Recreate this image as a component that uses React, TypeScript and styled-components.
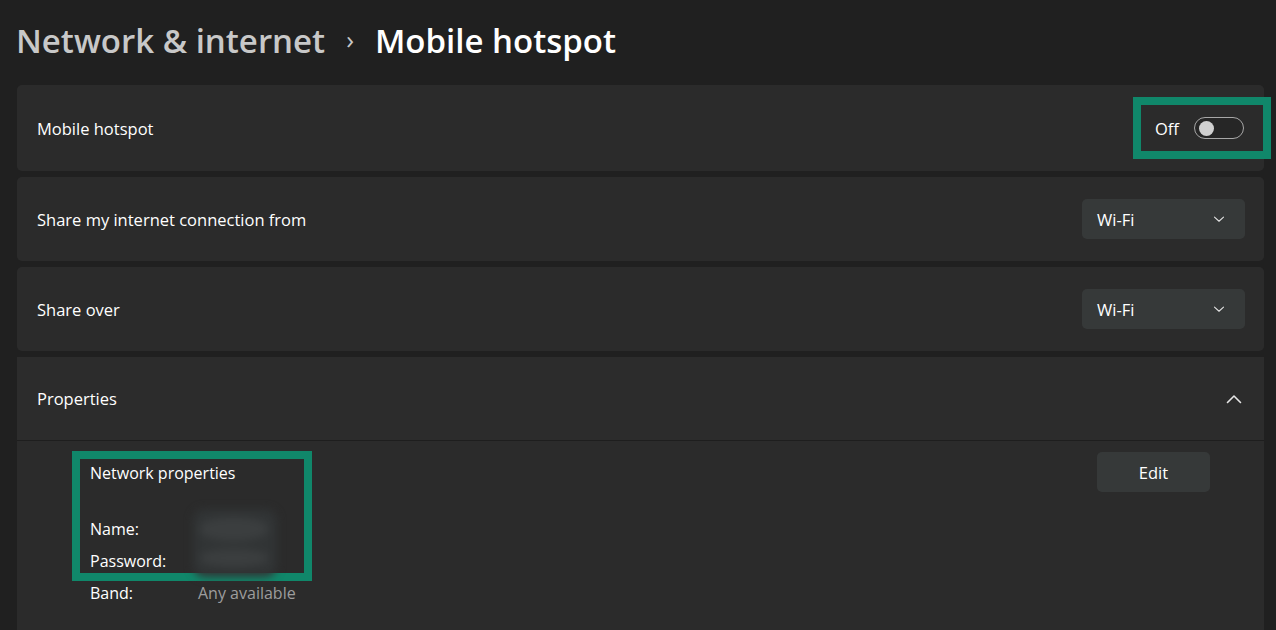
import React from "react";
import styled, { createGlobalStyle } from "styled-components";

const Global = createGlobalStyle`
  html, body { margin: 0; padding: 0; background: #202020; }
  body { font-family: "Open Sans", "Noto Sans", sans-serif; color: #ffffff; }
  * { box-sizing: border-box; }
`;

const Page = styled.div`
  width: 1276px;
  height: 630px;
  overflow: hidden;
  background: #202020;
  padding: 16px 12px 0 17px;
`;

const Title = styled.h1`
  margin: 0 0 19px -1px;
  display: flex;
  align-items: center;
  gap: 21px;
  font-size: 33px;
  font-weight: 600;
  line-height: 48px;
  height: 50px;
`;

const Crumb = styled.span<{ $current?: boolean }>`
  color: ${(p) => (p.$current ? "#ffffff" : "#c8c8c8")};
`;

const Sep = styled.span`
  color: #c8c8c8;
  font-size: 26px;
  font-weight: 400;
  margin-top: -5px;
`;

const List = styled.div`
  display: flex;
  flex-direction: column;
  gap: 6px;
`;

const Card = styled.div<{ $h: number }>`
  height: ${(p) => p.$h}px;
  background: #2b2b2b;
  border-radius: 5px;
  display: flex;
  align-items: center;
  justify-content: space-between;
  padding: 0 19px 0 20px;
`;

const Label = styled.span`
  font-size: 16.5px;
  color: #ffffff;
`;

const Highlight = styled.div`
  border: 8px solid #10876a;
`;

const ToggleBox = styled(Highlight)`
  width: 138px;
  height: 62px;
  margin-right: -26px;
  display: flex;
  align-items: center;
  padding-left: 14px;
  gap: 15px;
`;

const ToggleText = styled.span`
  font-size: 16.5px;
  color: #ffffff;
`;

const Toggle = styled.div`
  width: 50px;
  height: 22px;
  border-radius: 11px;
  border: 1px solid #a7a7a7;
  background: #262626;
  display: flex;
  align-items: center;
  padding-left: 4px;
`;

const Thumb = styled.div`
  width: 15px;
  height: 15px;
  border-radius: 50%;
  background: #d0d0d0;
`;

const Dropdown = styled.div`
  width: 163px;
  height: 40px;
  border-radius: 5px;
  background: #363939;
  display: flex;
  align-items: center;
  justify-content: space-between;
  padding: 0 20px 0 15px;
  font-size: 16.5px;
`;

const Section = styled.div`
  background: #2b2b2b;
  border-radius: 5px 5px 0 0;
  display: flex;
  flex-direction: column;
`;

const SectionHead = styled.div`
  height: 84px;
  background: #2c2c2c;
  border-bottom: 1px solid #1e1e1e;
  display: flex;
  align-items: center;
  justify-content: space-between;
  padding: 0 22px 0 20px;
`;

const SectionBody = styled.div`
  display: flex;
  justify-content: space-between;
  padding: 10px 54px 40px 55px;
`;

const PropsBox = styled(Highlight)`
  width: 240px;
  height: 130px;
  padding: 3px 0 0 10px;
  position: relative;
`;

const PropsTitle = styled.div`
  font-size: 16px;
  line-height: 22px;
  margin-bottom: 29px;
`;

const PropRow = styled.div`
  display: grid;
  grid-template-columns: 108px auto;
  font-size: 16px;
  line-height: 32px;
  height: 32px;
  position: relative;
`;

const PropKey = styled.span`
  color: #ffffff;
`;

const PropValue = styled.span`
  color: #9d9d9d;
`;

const Blur = styled.div`
  position: absolute;
  left: 113px;
  top: 50px;
  width: 84px;
  height: 68px;
  background: #313435;
  filter: blur(4px);
  border-radius: 12px;
`;

const Smudge = styled.div<{ $top: number; $w: number; $h: number }>`
  position: absolute;
  left: 6px;
  top: ${(p) => p.$top}px;
  width: ${(p) => p.$w}px;
  height: ${(p) => p.$h}px;
  border-radius: 50%;
  background: #3b3e3f;
`;

const BandRow = styled(PropRow)`
  margin: -4px 0 0 18px;
`;

const Button = styled.div`
  width: 113px;
  height: 40px;
  border-radius: 5px;
  background: #363939;
  display: flex;
  align-items: center;
  justify-content: center;
  font-size: 16.5px;
  margin-top: 1px;
`;

const Chevron = ({ up }: { up?: boolean }) => (
  <svg width={up ? 16 : 12} height={up ? 10 : 8} viewBox="0 0 16 10" fill="none">
    <path
      d={up ? "M1.5 8.5 L8 2 L14.5 8.5" : "M2 2.5 L8 8 L14 2.5"}
      stroke="#e6e6e6"
      strokeWidth={up ? 1.6 : 1.4}
      strokeLinecap="round"
      strokeLinejoin="round"
    />
  </svg>
);

export default function App() {
  return (
    <>
      <Global />
      <Page>
        <Title>
          <Crumb>Network &amp; internet</Crumb>
          <Sep>›</Sep>
          <Crumb $current>Mobile hotspot</Crumb>
        </Title>
        <List>
          <Card $h={86}>
            <Label>Mobile hotspot</Label>
            <ToggleBox>
              <ToggleText>Off</ToggleText>
              <Toggle>
                <Thumb />
              </Toggle>
            </ToggleBox>
          </Card>
          <Card $h={84}>
            <Label>Share my internet connection from</Label>
            <Dropdown>
              Wi-Fi
              <Chevron />
            </Dropdown>
          </Card>
          <Card $h={84}>
            <Label>Share over</Label>
            <Dropdown>
              Wi-Fi
              <Chevron />
            </Dropdown>
          </Card>
          <Section>
            <SectionHead>
              <Label>Properties</Label>
              <Chevron up />
            </SectionHead>
            <SectionBody>
              <div>
                <PropsBox>
                  <Blur>
                    <Smudge $top={8} $w={70} $h={24} />
                    <Smudge $top={40} $w={70} $h={18} />
                  </Blur>
                  <PropsTitle>Network properties</PropsTitle>
                  <PropRow>
                    <PropKey>Name:</PropKey>
                  </PropRow>
                  <PropRow>
                    <PropKey>Password:</PropKey>
                  </PropRow>
                </PropsBox>
                <BandRow>
                  <PropKey>Band:</PropKey>
                  <PropValue>Any available</PropValue>
                </BandRow>
              </div>
              <Button>Edit</Button>
            </SectionBody>
          </Section>
        </List>
      </Page>
    </>
  );
}
